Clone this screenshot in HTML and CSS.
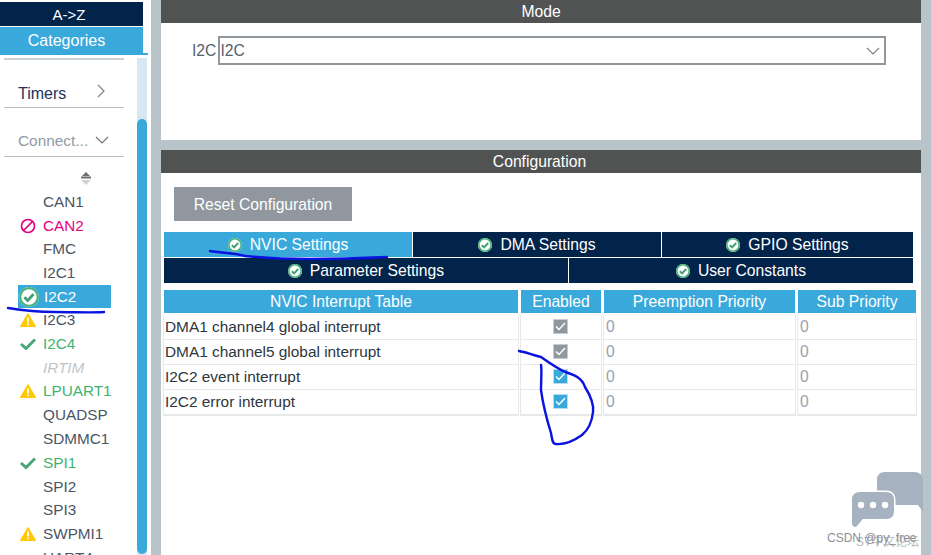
FILE: index.html
```html
<!DOCTYPE html>
<html lang="en">
<head>
<meta charset="utf-8">
<title>I2C2 Configuration</title>
<link rel="stylesheet" href="styles.css">
</head>
<body>
<svg width="0" height="0" class="defs">
  <symbol id="ok" viewBox="0 0 14 14">
    <circle cx="7" cy="7" r="7" fill="#fff"/>
    <circle cx="7" cy="7" r="6.2" fill="none" stroke="#49b27c" stroke-width="1.6"/>
    <path d="M3.8 7.2 6.1 9.4 10.2 5" fill="none" stroke="#3f9f75" stroke-width="2"/>
  </symbol>
  <symbol id="warn" viewBox="0 0 16 14">
    <path d="M8 0.5 15.6 13.5H0.4Z" fill="#ffc800" stroke="#ffc800" stroke-linejoin="round"/>
    <path d="M8 4.5V9.5M8 10.5V12.2" stroke="#fff" stroke-width="1.8"/>
  </symbol>
  <symbol id="tick" viewBox="0 0 16 12">
    <path d="M1 6 6 10.5 15 1.5" fill="none" stroke="#4aa876" stroke-width="3"/>
  </symbol>
</svg>
<div class="app">
  <aside class="side">
    <div class="side-tab side-tab-dark">A-&gt;Z</div>
    <div class="side-tab side-tab-active">Categories</div>
    <div class="side-rule"></div>
    <div class="side-body">
      <div class="side-content">
        <div class="cat cat-timers">
          <span>Timers</span>
          <svg class="chev" width="10" height="14" viewBox="0 0 10 14"><path d="M2 1 8 7 2 13" fill="none" stroke="#808488" stroke-width="1.2"/></svg>
        </div>
        <div class="cat cat-conn">
          <span>Connect...</span>
          <svg class="chev" width="14" height="10" viewBox="0 0 14 10"><path d="M1 2 7 8 13 2" fill="none" stroke="#707478" stroke-width="1.2"/></svg>
        </div>
        <div class="sorter">
          <svg width="12" height="14" viewBox="0 0 12 14"><path d="M6 0 10 4H2Z" fill="#6c6f72"/><rect x="1" y="4.500" width="10" height="2" fill="#6c6f72"/><path d="M1 8H11L6 13Z" fill="#d0d3d6"/></svg>
        </div>
        <ul class="ip-list">
          <li class="ip"><span class="ip-icon"></span><span>CAN1</span></li>
          <li class="ip ip-red"><span class="ip-icon"><svg width="16" height="16" viewBox="0 0 16 16"><circle cx="8" cy="8" r="6.500" fill="none" stroke="#e6007e" stroke-width="1.700"/><path d="M3.500 12.500 12.500 3.500" stroke="#e6007e" stroke-width="1.700"/></svg></span><span>CAN2</span></li>
          <li class="ip"><span class="ip-icon"></span><span>FMC</span></li>
          <li class="ip"><span class="ip-icon"></span><span>I2C1</span></li>
          <li class="ip ip-sel"><span class="ip-icon"><svg width="20" height="20"><use href="#ok"/></svg></span><span>I2C2</span></li>
          <li class="ip"><span class="ip-icon"><svg width="16" height="14"><use href="#warn"/></svg></span><span>I2C3</span></li>
          <li class="ip ip-green"><span class="ip-icon"><svg width="16" height="12"><use href="#tick"/></svg></span><span>I2C4</span></li>
          <li class="ip ip-off"><span class="ip-icon"></span><span>IRTIM</span></li>
          <li class="ip ip-green"><span class="ip-icon"><svg width="16" height="14"><use href="#warn"/></svg></span><span>LPUART1</span></li>
          <li class="ip"><span class="ip-icon"></span><span>QUADSP</span></li>
          <li class="ip"><span class="ip-icon"></span><span>SDMMC1</span></li>
          <li class="ip ip-green"><span class="ip-icon"><svg width="16" height="12"><use href="#tick"/></svg></span><span>SPI1</span></li>
          <li class="ip"><span class="ip-icon"></span><span>SPI2</span></li>
          <li class="ip"><span class="ip-icon"></span><span>SPI3</span></li>
          <li class="ip"><span class="ip-icon"><svg width="16" height="14"><use href="#warn"/></svg></span><span>SWPMI1</span></li>
          <li class="ip"><span class="ip-icon"></span><span>UART4</span></li>
        </ul>
      </div>
      <div class="scroll"><div class="thumb"></div></div>
    </div>
  </aside>
  <main class="main">
    <section class="mode">
      <h2 class="bar">Mode</h2>
      <div class="mode-row">
        <span class="mode-label">I2C</span>
        <div class="select">
          <span>I2C</span>
          <svg width="14" height="10" viewBox="0 0 14 10"><path d="M1 2 7 8 13 2" fill="none" stroke="#808488" stroke-width="1.2"/></svg>
        </div>
      </div>
    </section>
    <section class="config">
      <h2 class="bar bar-config">Configuration</h2>
      <div class="config-body">
        <button class="reset" type="button">Reset Configuration</button>
        <div class="tabs">
          <div class="tab-row">
            <div class="tab tab-active"><svg width="14" height="14"><use href="#ok"/></svg>NVIC Settings</div>
            <div class="tab"><svg width="14" height="14"><use href="#ok"/></svg>DMA Settings</div>
            <div class="tab tab-wide"><svg width="14" height="14"><use href="#ok"/></svg>GPIO Settings</div>
          </div>
          <div class="tab-row">
            <div class="tab tab-param"><svg width="14" height="14"><use href="#ok"/></svg>Parameter Settings</div>
            <div class="tab tab-user"><svg width="14" height="14"><use href="#ok"/></svg>User Constants</div>
          </div>
        </div>
        <div class="table">
          <div class="th">NVIC Interrupt Table</div>
          <div class="th">Enabled</div>
          <div class="th">Preemption Priority</div>
          <div class="th">Sub Priority</div>

          <div class="td td-name">DMA1 channel4 global interrupt</div>
          <div class="td td-check"><span class="check"><svg width="11" height="9" viewBox="0 0 11 9"><path d="M1 4.500 4 7.500 10 1" fill="none" stroke="#fff" stroke-width="1.500"/></svg></span></div>
          <div class="td td-num">0</div>
          <div class="td td-num">0</div>

          <div class="td td-name">DMA1 channel5 global interrupt</div>
          <div class="td td-check"><span class="check"><svg width="11" height="9" viewBox="0 0 11 9"><path d="M1 4.500 4 7.500 10 1" fill="none" stroke="#fff" stroke-width="1.500"/></svg></span></div>
          <div class="td td-num">0</div>
          <div class="td td-num">0</div>

          <div class="td td-name">I2C2 event interrupt</div>
          <div class="td td-check"><span class="check check-on"><svg width="11" height="9" viewBox="0 0 11 9"><path d="M1 4.500 4 7.500 10 1" fill="none" stroke="#fff" stroke-width="1.500"/></svg></span></div>
          <div class="td td-num">0</div>
          <div class="td td-num">0</div>

          <div class="td td-name">I2C2 error interrupt</div>
          <div class="td td-check"><span class="check check-on"><svg width="11" height="9" viewBox="0 0 11 9"><path d="M1 4.500 4 7.500 10 1" fill="none" stroke="#fff" stroke-width="1.500"/></svg></span></div>
          <div class="td td-num">0</div>
          <div class="td td-num">0</div>
        </div>
      </div>
    </section>
  </main>
</div>
<svg class="ink" width="931" height="555" viewBox="0 0 931 555">
  <g fill="none" stroke="#0a12e0" stroke-width="2.400" stroke-linecap="round" stroke-linejoin="round">
    <path d="M8 308C20 310 35 312 55 312C75 312 90 313 104 312"/>
    <path d="M210 251C222 253 235 253 245 256C265 258 290 259 310 259C335 259 365 258 387 257"/>
    <path d="M519 351C526 352 532 355 541 357C548 362 555 367 565 372C575 375 582 378 585 387C590 395 594 405 593 412C592 422 588 430 582 435C575 440 566 445 556 444C552 444 552 438 551 433C547 420 543 405 541 390C541 380 542 370 541 365"/>
  </g>
</svg>
<div class="watermark">
  <svg class="wm-icon" width="72" height="56" viewBox="0 0 72 56">
    <path d="M33 0H62Q71 0 71 9V40L66 33H33Q25 33 25 25V8Q25 0 33 0Z" fill="#a6b2c0"/>
    <path d="M8 20H34Q42 20 42 28V39Q42 47 34 47H11L4 55Q0 55 0 51V28Q0 20 8 20Z" fill="#a6b2c0" stroke="#fff" stroke-width="3" paint-order="stroke"/>
    <circle cx="9" cy="33" r="3.200" fill="#fff"/><circle cx="21" cy="33" r="3.200" fill="#fff"/><circle cx="33" cy="33" r="3.200" fill="#fff"/>
  </svg>
  <span class="wm-a">CSDN @py_free</span>
  <span class="wm-b">ST中文论坛</span>
</div>
</body>
</html>
```
FILE: styles.css
```css
* { box-sizing: border-box; }
html, body { margin: 0; height: 100%; overflow: hidden; }
body { background: #b8c4ca; font-family: "Liberation Sans", Arial, sans-serif; font-size: 15.7px; color: #3c4650; }
.defs { position: absolute; }
.app { display: flex; height: 555px; width: 931px; overflow: hidden; }

.side { width: 151px; flex: none; background: #fff; padding-top: 2px; overflow: hidden; }
.side-tab { width: 143px; text-align: center; color: #fff; }
.side-tab-dark { height: 24px; line-height: 25px; background: #02234a; font-size: 15px; padding-right: 5px; }
.side-tab-active { height: 26px; margin-top: 1px; line-height: 27px; background: #39a9dc; font-size: 16px; padding-right: 10px; }
.side-rule { width: 148px; height: 3px; background: #39a9dc; border-top: 1px solid #39a9dc; border-bottom: 1px solid #fff; }
.side-body { display: flex; height: 499px; padding-left: 4px; }
.side-content { width: 120px; margin-top: 2px; border-top: 2px solid #ccd3d8; height: 520px; flex: none; }
.scroll { width: 10px; margin-left: 13px; margin-top: 2px; background: #d8e7f4; height: 499px; padding-top: 61px; }
.thumb { height: 435px; border-radius: 5px; background: #39a9dc; }

.cat { display: flex; justify-content: space-between; align-items: center; border-bottom: 1px solid #b8c2c8; padding-left: 14px; }
.cat-timers { height: 48px; padding-top: 20px; padding-right: 18px; color: #24305e; font-size: 16px; }
.cat-timers .chev { margin-top: -6px; }
.cat-conn { height: 49px; padding-top: 18px; padding-right: 15px; color: #8f9ba8; font-size: 15.4px; }
.cat-conn .chev { margin-top: -3px; }
.sorter { height: 32px; padding: 15px 0 0 76px; line-height: 0; }

.ip-list { list-style: none; margin: 0; padding: 1px 0 0 10px; }
.ip { display: flex; align-items: center; height: 23.8px; font-size: 15.3px; color: #4b5563; white-space: nowrap; }
.ip-icon { width: 29px; flex: none; display: flex; align-items: center; padding-left: 6px; }
.ip-red { color: #e6007e; }
.ip-green { color: #3cb371; }
.ip-off { color: #c0c5cb; font-style: italic; }
.ip-sel { background: #39a9dc; color: #fff; width: 93px; margin-left: 4px; height: 23px; }
.ip-sel .ip-icon { width: 26px; padding-left: 1px; }

.main { width: 760px; margin-left: 10px; flex: none; display: flex; flex-direction: column; gap: 10px; }
.bar { margin: 0; height: 23px; line-height: 23px; background: #515352; color: #fff; font-size: 15.7px; font-weight: 400; text-align: center; }
.bar-config { padding-right: 3px; }
.mode { height: 140px; background: #fff; }
.mode-row { display: flex; align-items: center; gap: 2px; padding: 13px 35px 0 31px; }
.mode-label { color: #55606b; }
.select { flex: 1; height: 29px; display: flex; justify-content: space-between; align-items: center; padding: 0 4px 0 0; border: 2px solid #8f979e; color: #55606b; background: #fff; }

.config { flex: 1; background: #fff; }
.config-body { padding: 14px 4px 0 3px; }
.reset { display: block; width: 178px; height: 34px; margin-left: 10px; padding: 2px 0 0; border: 0; background: #90979e; color: #fff; font: 15.7px "Liberation Sans", Arial, sans-serif; }
.tabs { display: flex; flex-direction: column; gap: 1px; margin-top: 11px; width: 749px; }
.tab-row { display: flex; gap: 1px; height: 25px; }
.tab { flex: 248 0 0; display: flex; align-items: center; justify-content: center; gap: 8px; background: #02234a; color: #fff; }
.tab-wide { flex: 251 0 0; }
.tab-active { background: #39a9dc; }
.tab-param { flex: 404 0 0; }
.tab-user { flex: 344 0 0; }

.table { display: grid; grid-template-columns: 356px 82px 193px 120px; grid-auto-rows: 24px; margin: 7px 0 0 0; row-gap: 1px; width: 754px; column-gap: 1px; }
.th { margin-right: 2px; height: 23px; line-height: 23px; background: #39a9dc; color: #fff; text-align: center; }
.td { background: #fff; box-shadow: 0 1px 0 1px #e6e8ea; line-height: 23px; margin-right: 2px; }
.td-name { padding-left: 1px; font-size: 15.4px; color: #2e3640; }
.td-num { padding-left: 2px; color: #9aa2ab; }
.td-check { display: flex; align-items: center; justify-content: center; padding-right: 1px; }
.check { width: 15px; height: 15px; margin-top: -1px; display: flex; align-items: center; justify-content: center; background: #90979e; border: 1px solid #c8ccd0; }
.check-on { background: #39a9dc; border-color: #b8dcf0; }

.ink { position: absolute; left: 0; top: 0; pointer-events: none; }
.watermark { position: absolute; left: 800px; top: 470px; width: 131px; height: 85px; }
.wm-icon { position: absolute; left: 52px; top: 2px; }
.wm-a, .wm-b { position: absolute; top: 61px; font-size: 12px; white-space: nowrap; color: #8c9096; font-family: "Liberation Sans", "Noto Sans CJK SC", sans-serif; }
.wm-a { left: 27px; }
.wm-b { left: 56px; top: 62px; opacity: .6; }
```
